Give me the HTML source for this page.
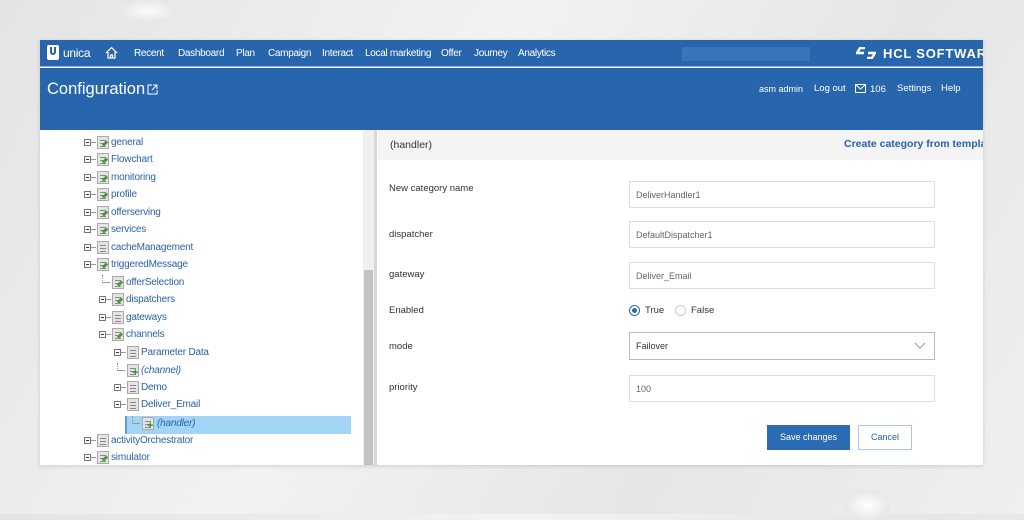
<!DOCTYPE html>
<html><head><meta charset="utf-8"><style>
*{margin:0;padding:0;box-sizing:border-box}
body{width:1024px;height:514px;overflow:hidden;background:linear-gradient(120deg,#e4e4e4,#f2f2f2 40%,#e6e6e6 70%,#efefef);font-family:"Liberation Sans",sans-serif;position:relative}
.a{position:absolute}
#win{left:40px;top:40px;width:943px;height:425px;background:#fff;overflow:hidden;box-shadow:0 1px 4px rgba(0,0,0,.15)}
#nav{left:0;top:0;width:943px;height:27px;background:#2766ad;border-bottom:1px solid #8fb3dd;color:#fff;font-size:10px}
#nav span{position:absolute;top:8px;letter-spacing:-.3px;white-space:nowrap}
#hdr{left:0;top:28px;width:943px;height:62px;background:#2766ad;color:#fff}
.tree{font-size:10px;color:#2a62a8;letter-spacing:-.2px}
.row{position:absolute;height:14px;line-height:14px;white-space:nowrap}
.exp{position:absolute;width:7px;height:7px;border:1px solid #777;background:#fff}
.exp:after{content:"";position:absolute;left:1px;top:2px;width:3px;height:1px;background:#333}
.exp:before{content:"";position:absolute;left:6px;top:2px;width:5px;height:1px;background:#999}
.dl{position:absolute;width:8px;height:8px;border-left:1px dotted #999;border-bottom:1px solid #999}
.ico{position:absolute;width:12px;height:13px;background:#e4e4e4;border:1px solid #aaa}
.ico:before{content:"";position:absolute;left:2px;top:3px;width:6px;height:1px;background:#888;box-shadow:0 3px 0 #888,0 6px 0 #888}
.ico.e:after{content:"";position:absolute;left:4px;top:5px;width:6px;height:3px;background:#4a9a30;transform:rotate(-45deg)}
.ico.p:after{content:"+";position:absolute;left:4px;top:2px;color:#2a9a2a;font-weight:bold;font-size:11px}
.lab{font-size:9.5px;color:#333}
.inp{position:absolute;left:589px;width:306px;height:27px;border:1px solid #ddd;font-size:9px;color:#666;padding:8px 6px;background:#fff}
</style></head><body>
<div class="a" style="left:118px;top:0;width:60px;height:22px;border-radius:50%;background:radial-gradient(#fff,#ddd);opacity:.8"></div>
<div class="a" style="left:845px;top:490px;width:45px;height:30px;border-radius:50%;background:radial-gradient(#fff,#ddd)"></div>
<div id="win" class="a">
<div id="nav" class="a">
 <div class="a" style="left:7px;top:5px;width:12px;height:15px;background:#fff;border-radius:2px"><div class="a" style="left:3px;top:2px;width:6px;height:8px;border:2px solid #2766ad;border-top:0;border-radius:0 0 3px 3px"></div></div>
 <span style="left:23px;top:6px;font-size:12px">unica</span>
 <svg class="a" style="left:65px;top:6px" width="13" height="13" viewBox="0 0 13 13"><path d="M1 7L6.5 1.5 12 7M3 6v6h7V6M5.5 12V9h2v3" fill="none" stroke="#fff" stroke-width="1.2"/></svg>
 <span style="left:94px">Recent</span><span style="left:138px">Dashboard</span><span style="left:196px">Plan</span><span style="left:228px">Campaign</span><span style="left:282px">Interact</span><span style="left:325px">Local marketing</span><span style="left:401px">Offer</span><span style="left:434px">Journey</span><span style="left:478px">Analytics</span>
 <div class="a" style="left:642px;top:7px;width:128px;height:14px;background:#3a75b8"></div>
 <svg class="a" style="left:816px;top:7px" width="20" height="12" viewBox="0 0 20 12"><path d="M9 1H4L1 6h7M11 11h5l3-5h-7" fill="none" stroke="#fff" stroke-width="2.4"/></svg>
 <span style="left:843px;top:6px;font-size:13px;font-weight:bold;letter-spacing:.8px">HCL SOFTWARE</span>
</div>
<div id="hdr" class="a">
 <div class="a" style="left:7px;top:12px;font-size:16.5px">Configuration</div>
 <svg class="a" style="left:107px;top:16px" width="11" height="11" viewBox="0 0 11 11"><path d="M5 1H1v9h9V6M6 1h4v4M10 1L5 6" fill="none" stroke="#fff" stroke-width="1"/></svg>
 <div class="a" style="left:719px;top:16px;font-size:9px">asm admin</div>
 <div class="a" style="left:774px;top:15px;font-size:9.5px">Log out</div>
 <svg class="a" style="left:815px;top:16px" width="11" height="9"><rect x=".5" y=".5" width="10" height="8" fill="none" stroke="#fff"/><path d="M.5 .5L5.5 5 10.5.5" fill="none" stroke="#fff"/></svg>
 <div class="a" style="left:830px;top:16px;font-size:9.5px">106</div>
 <div class="a" style="left:857px;top:15px;font-size:9.5px">Settings</div>
 <div class="a" style="left:901px;top:15px;font-size:9.5px">Help</div>
</div>
<!-- left tree -->
<div class="a" style="left:323px;top:90px;width:11px;height:335px;background:#f0f0f0"></div>
<div class="a" style="left:324px;top:230px;width:9px;height:195px;background:#c2c2c2"></div>
<div class="a" style="left:334px;top:90px;width:3px;height:335px;background:#d8d8d8"></div>
<div class="a" style="left:85px;top:376px;width:226px;height:18px;background:#a2d4f6;border-left:2px solid #5aa0d8"></div>
<div class="tree">
 <div class="exp" style="left:44px;top:99px"></div><div class="ico e" style="left:57px;top:96px"></div><div class="row" style="left:71px;top:96px">general</div>
 <div class="exp" style="left:44px;top:116px"></div><div class="ico e" style="left:57px;top:113px"></div><div class="row" style="left:71px;top:113px">Flowchart</div>
 <div class="exp" style="left:44px;top:134px"></div><div class="ico e" style="left:57px;top:131px"></div><div class="row" style="left:71px;top:131px">monitoring</div>
 <div class="exp" style="left:44px;top:151px"></div><div class="ico e" style="left:57px;top:148px"></div><div class="row" style="left:71px;top:148px">profile</div>
 <div class="exp" style="left:44px;top:169px"></div><div class="ico e" style="left:57px;top:166px"></div><div class="row" style="left:71px;top:166px">offerserving</div>
 <div class="exp" style="left:44px;top:186px"></div><div class="ico e" style="left:57px;top:183px"></div><div class="row" style="left:71px;top:183px">services</div>
 <div class="exp" style="left:44px;top:204px"></div><div class="ico" style="left:57px;top:201px"></div><div class="row" style="left:71px;top:201px">cacheManagement</div>
 <div class="exp" style="left:44px;top:221px"></div><div class="ico e" style="left:57px;top:218px"></div><div class="row" style="left:71px;top:218px">triggeredMessage</div>
 <div class="dl" style="left:62px;top:235px"></div><div class="ico e" style="left:72px;top:236px"></div><div class="row" style="left:86px;top:236px">offerSelection</div>
 <div class="exp" style="left:59px;top:256px"></div><div class="ico e" style="left:72px;top:253px"></div><div class="row" style="left:86px;top:253px">dispatchers</div>
 <div class="exp" style="left:59px;top:274px"></div><div class="ico" style="left:72px;top:271px"></div><div class="row" style="left:86px;top:271px">gateways</div>
 <div class="exp" style="left:59px;top:291px"></div><div class="ico e" style="left:72px;top:288px"></div><div class="row" style="left:86px;top:288px">channels</div>
 <div class="exp" style="left:74px;top:309px"></div><div class="ico" style="left:87px;top:306px"></div><div class="row" style="left:101px;top:306px">Parameter Data</div>
 <div class="dl" style="left:77px;top:323px"></div><div class="ico p" style="left:87px;top:324px"></div><div class="row" style="left:101px;top:324px;font-style:italic">(channel)</div>
 <div class="exp" style="left:74px;top:344px"></div><div class="ico" style="left:87px;top:341px"></div><div class="row" style="left:101px;top:341px">Demo</div>
 <div class="exp" style="left:74px;top:361px"></div><div class="ico" style="left:87px;top:358px"></div><div class="row" style="left:101px;top:358px">Deliver_Email</div>
 <div class="dl" style="left:92px;top:376px"></div><div class="ico p" style="left:102px;top:377px"></div><div class="row" style="left:117px;top:377px;font-style:italic">(handler)</div>
 <div class="exp" style="left:44px;top:397px"></div><div class="ico" style="left:57px;top:394px"></div><div class="row" style="left:71px;top:394px">activityOrchestrator</div>
 <div class="exp" style="left:44px;top:414px"></div><div class="ico e" style="left:57px;top:411px"></div><div class="row" style="left:71px;top:411px">simulator</div>
</div>
<!-- right panel -->
<div class="a" style="left:338px;top:90px;width:605px;height:30px;background:#f4f4f4"></div>
<div class="a" style="left:350px;top:99px;font-size:10.5px;color:#333">(handler)</div>
<div class="a" style="left:804px;top:98px;font-size:10.5px;color:#2a62a8;font-weight:bold;white-space:nowrap">Create category from template</div>
<div class="a lab" style="left:349px;top:143px">New category name</div>
<div class="a lab" style="left:349px;top:189px">dispatcher</div>
<div class="a lab" style="left:349px;top:229px">gateway</div>
<div class="a lab" style="left:349px;top:265px">Enabled</div>
<div class="a lab" style="left:349px;top:301px">mode</div>
<div class="a lab" style="left:349px;top:342px">priority</div>
<div class="inp" style="top:141px">DeliverHandler1</div>
<div class="inp" style="top:181px">DefaultDispatcher1</div>
<div class="inp" style="top:222px">Deliver_Email</div>
<div class="a" style="left:589px;top:265px;width:11px;height:11px;border-radius:50%;border:1px solid #2766ad;background:#fff"><div class="a" style="left:2px;top:2px;width:5px;height:5px;border-radius:50%;background:#2766ad"></div></div>
<div class="a lab" style="left:605px;top:265px">True</div>
<div class="a" style="left:635px;top:265px;width:11px;height:11px;border-radius:50%;border:1px solid #ccc"></div>
<div class="a lab" style="left:651px;top:265px">False</div>
<div class="inp" style="top:292px;border-color:#bbb;color:#333;height:28px">Failover</div>
<svg class="a" style="left:874px;top:302px" width="12" height="8"><path d="M1 1l5 5 5-5" fill="none" stroke="#999"/></svg>
<div class="inp" style="top:335px">100</div>
<div class="a" style="left:727px;top:385px;width:83px;height:25px;background:#2a6db5;color:#fff;font-size:9px;text-align:center;line-height:25px">Save changes</div>
<div class="a" style="left:818px;top:385px;width:54px;height:25px;border:1px solid #a9c6e6;color:#2a62a8;font-size:9px;text-align:center;line-height:23px">Cancel</div>
</div>
</body></html>
